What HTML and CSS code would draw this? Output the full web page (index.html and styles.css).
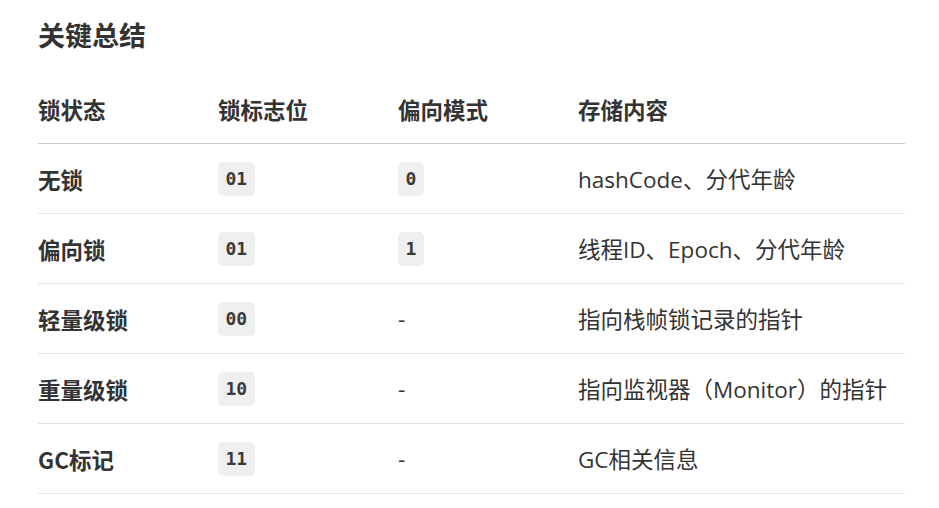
FILE: index.html
```html
<!DOCTYPE html>
<html lang="zh-CN">
<head>
<meta charset="utf-8">
<title>关键总结</title>
<link rel="stylesheet" href="styles.css">
</head>
<body>
<main class="page">
  <h2 class="title">关键总结</h2>
  <table class="summary">
    <thead>
      <tr>
        <th class="c1">锁状态</th>
        <th class="c2">锁标志位</th>
        <th class="c3">偏向模式</th>
        <th class="c4">存储内容</th>
      </tr>
    </thead>
    <tbody>
      <tr>
        <td class="state">无锁</td>
        <td><code>01</code></td>
        <td><code>0</code></td>
        <td>hashCode、分代年龄</td>
      </tr>
      <tr>
        <td class="state">偏向锁</td>
        <td><code>01</code></td>
        <td><code>1</code></td>
        <td>线程ID、Epoch、分代年龄</td>
      </tr>
      <tr>
        <td class="state">轻量级锁</td>
        <td><code>00</code></td>
        <td>-</td>
        <td>指向栈帧锁记录的指针</td>
      </tr>
      <tr>
        <td class="state">重量级锁</td>
        <td><code>10</code></td>
        <td>-</td>
        <td>指向监视器（Monitor）的指针</td>
      </tr>
      <tr>
        <td class="state">GC标记</td>
        <td><code>11</code></td>
        <td>-</td>
        <td>GC相关信息</td>
      </tr>
    </tbody>
  </table>
</main>
</body>
</html>
```
FILE: styles.css
```css
html, body {
  margin: 0;
  padding: 0;
  background: #ffffff;
}

body {
  font-family: "Open Sans", "Noto Sans CJK SC", sans-serif;
  color: #333333;
}

.page {
  padding: 17px 0 0 38px;
}

.title {
  margin: 0;
  font-family: "Noto Sans CJK SC", sans-serif;
  font-size: 27px;
  line-height: 36px;
  font-weight: 700;
  color: #333333;
}

.summary {
  margin-top: 21px;
  width: 867px;
  border-collapse: collapse;
  table-layout: fixed;
}

.summary th,
.summary td {
  text-align: left;
  padding: 0;
  height: 69px;
  vertical-align: middle;
  font-size: 22.5px;
}

.summary th {
  font-family: "Noto Sans CJK SC", sans-serif;
  font-weight: 700;
  border-bottom: 1px solid #c8c8c8;
}

.summary td {
  border-bottom: 1px solid #e3e3e3;
}

.c1, .c2, .c3 { width: 180px; }

.summary td.state {
  font-family: "Noto Sans CJK SC", sans-serif;
  font-weight: 700;
}

code {
  display: inline-block;
  font-family: "DejaVu Sans Mono", monospace;
  font-weight: 700;
  font-size: 18px;
  line-height: 34px;
  padding: 0 7.5px;
  background: #efefef;
  border-radius: 5px;
  color: #3a3a3a;
  vertical-align: middle;
}
```
